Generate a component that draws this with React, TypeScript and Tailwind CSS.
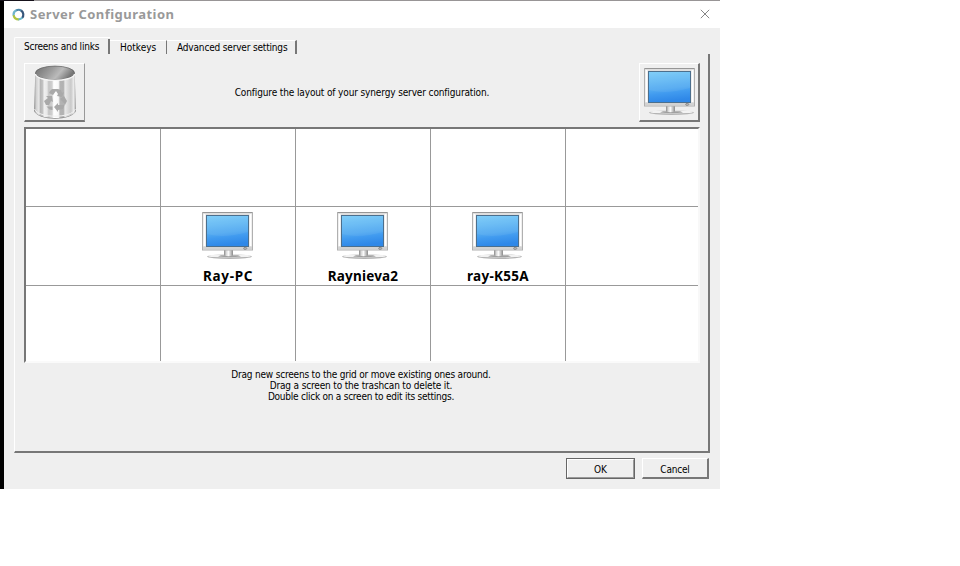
import React, { useId } from "react";

function Monitor({ className }: { className: string }) {
  const id = useId();
  return (
    <svg className={className} viewBox="0 0 52 48" preserveAspectRatio="none">
      <defs>
        <linearGradient id={id + "s"} x1="0" y1="0" x2="0.15" y2="1">
          <stop offset="0" stopColor="#7accf8" />
          <stop offset="0.6" stopColor="#51a9f1" />
          <stop offset="0.75" stopColor="#409aef" />
          <stop offset="1" stopColor="#2f88e8" />
        </linearGradient>
        <linearGradient id={id + "b"} x1="0" y1="0" x2="1" y2="0">
          <stop offset="0" stopColor="#8a8a8a" />
          <stop offset="0.25" stopColor="#d8d8d8" />
          <stop offset="0.5" stopColor="#fafafa" />
          <stop offset="1" stopColor="#8a8a8a" />
        </linearGradient>
      </defs>
      <ellipse cx="27.5" cy="44.6" rx="22.5" ry="2.4" fill="#b4b4b4" />
      <ellipse cx="27.5" cy="43.9" rx="21.5" ry="1.7" fill="#f2f2f2" />
      <path d="M19 43.3h17l3 1.2q-11 1.6-23 0z" fill="#a0a0a0" />
      <path d="M22 38h9v5.500q-4.500 1.500-9 0z" fill={`url(#${id}b)`} />
      <rect x="0.5" y="0.5" width="50" height="37.5" fill="#dedede" stroke="#b0b0b0" />
      <path d="M1 0.5h49" stroke="#969696" />
      <path d="M2.5 2v32M48.5 2v32" stroke="#fff" strokeWidth="2" />
      <rect x="1" y="35" width="49" height="2.5" fill="#d3d3d3" />
      <rect x="4.5" y="3.5" width="42" height="31" fill={`url(#${id}s)`} stroke="#4c6f8d" />
      <path d="M5 22q16 5 41-2v-16h-41z" fill="#fff" opacity="0.06" />
      <ellipse cx="43.2" cy="36.4" rx="1.6" ry="1" fill="#bbb" stroke="#777" strokeWidth="0.7" />
    </svg>
  );
}

function Trash() {
  return (
    <svg className="h-[55px] w-[44px]" viewBox="0 0 44 55">
      <defs>
        <linearGradient id="canBody">
          <stop offset="0" stopColor="#8a8a8a" />
          <stop offset="0.05" stopColor="#cfcfcf" />
          <stop offset="0.12" stopColor="#e8e8e8" />
          <stop offset="0.15" stopColor="#b5b5b5" />
          <stop offset="0.21" stopColor="#c4c4c4" />
          <stop offset="0.24" stopColor="#f0f0f0" />
          <stop offset="0.31" stopColor="#e8e8e8" />
          <stop offset="0.35" stopColor="#c5c5c5" />
          <stop offset="0.43" stopColor="#d0d0d0" />
          <stop offset="0.47" stopColor="#fff" />
          <stop offset="0.58" stopColor="#f8f8f8" />
          <stop offset="0.62" stopColor="#b4b4b4" />
          <stop offset="0.7" stopColor="#b1b1b1" />
          <stop offset="0.74" stopColor="#e8e8e8" />
          <stop offset="0.88" stopColor="#c9c9c9" />
          <stop offset="0.95" stopColor="#eee" />
          <stop offset="1" stopColor="#8a8a8a" />
        </linearGradient>
        <linearGradient id="canInside" x1="0" y1="0" x2="1" y2="0.3">
          <stop offset="0" stopColor="#6f6f6f" />
          <stop offset="0.45" stopColor="#9c9c9c" />
          <stop offset="0.7" stopColor="#bbb" />
          <stop offset="1" stopColor="#777" />
        </linearGradient>
      </defs>
      <path d="M1 45.5C4 56.5 40 56.5 43 45.5z" fill="#858585" />
      <path d="M2.3 8L1 45.5C4 55.5 40 55.5 43 45.5L41.7 8z" fill="url(#canBody)" />
      <path d="M1.6 44C5 53.6 39 53.6 42.4 44" fill="none" stroke="#f1f1f1" strokeWidth="1" />
      <ellipse cx="22" cy="8" rx="19.6" ry="6.9" fill="url(#canInside)" stroke="#606060" strokeWidth="0.7" />
      <path d="M2.5 9C4 17.5 40 17.5 41.5 9" fill="none" stroke="#f7f7f7" strokeWidth="1.4" />
      <g fill="#a9a9a9">
        <path d="M17 26l2-2h6l3 1 1 3 2-1-2 5-5-1 1-2-2-3-3 4-4-2z" />
        <path d="M13 31l6 0 1 6-2-1-2 4h-3l-2-4 4-3z" />
        <path d="M13.500 41.500h6v3.500l-3-.5z" />
        <path d="M21 42l4-4v2h5l2-1-2 5-5 1v2z" />
        <path d="M27 34l4-3 3 5-2 4-2-3z" />
      </g>
    </svg>
  );
}

const labelFont = "font-['DejaVu_Sans_Condensed','DejaVu_Sans',sans-serif] font-[stretch:condensed]";
const boldFont = "font-['Noto_Sans','Open_Sans',sans-serif] font-bold";

const rows: string[][] = [
  ["", "", "", "", ""],
  ["", "Ray-PC", "Raynieva2", "ray-K55A", ""],
  ["", "", "", "", ""],
];
const spacing: Record<string, string> = {
  "Ray-PC": "tracking-[0.7px]",
  Raynieva2: "tracking-[0.2px]",
  "ray-K55A": "tracking-[0.3px]",
};

export default function App() {
  return (
    <div className="h-[566px] w-[960px] overflow-hidden bg-white text-black">
      <div className="flex h-px w-[720px] bg-[#989596]">
        <div className="w-[34px] bg-[#15111a]" />
      </div>
      <div className="flex h-[488px] w-[720px] bg-black pl-1">
        <div className="flex w-[716px] flex-col bg-[#efefef]">
          <header className="flex h-[27px] shrink-0 items-center bg-white pl-[8px] pr-[10px]">
            <svg className="-mt-px h-[13px] w-[13px]" viewBox="0 0 13 13" fill="none" strokeWidth="2.2">
              <path d="M1.8 8A5 5 0 0 1 4.5 2.2" stroke="#6fb5cc" />
              <path d="M4.2 2.4A5 5 0 0 1 9.5 2.8" stroke="#4a86a8" />
              <path d="M9.2 2.500A5 5 0 0 1 10 10" stroke="#35557a" />
              <path d="M10.3 9.6A5 5 0 0 1 6 11.3" stroke="#6cb8ce" />
              <path d="M6.6 11.4A5 5 0 0 1 1.700 7.3" stroke="#b1c43e" />
            </svg>
            <h1 className={`${boldFont} -mt-[2px] ml-[5px] whitespace-nowrap text-[13px] leading-[20px] tracking-[0.47px] text-[#999]`}>Server Configuration</h1>
            <svg className="-mt-px ml-auto h-[10px] w-[10px]" viewBox="0 0 10 10">
              <path d="M.8.8l8.4 8.4M9.200.8L.8 9.200" stroke="#777" strokeWidth="0.9" />
            </svg>
          </header>

          <nav className={`${labelFont} mt-[9px] flex h-[17px] shrink-0 items-end whitespace-nowrap pl-[10px] text-[10px] leading-[12px]`}>
            <div className="h-[17px] w-[96px] rounded-tl-[2px] border-l border-t border-white pl-[9px] pt-[3px]">
              <div className="-mt-[2px] h-[15px] border-r-2 border-[#777] pt-[2px] tracking-[-0.22px]">Screens and links</div>
            </div>
            <div className="h-[14px] w-[57px] border-r border-t border-r-[#777] border-t-white pl-[10px] pt-[1px]">Hotkeys</div>
            <div className="h-[14px] w-[130px] border-r-2 border-t border-r-[#777] border-t-white pl-[10px] pt-[1px] tracking-[-0.17px]">Advanced server settings</div>
          </nav>

          <main className="ml-[10px] flex h-[399px] w-[696px] shrink-0 flex-col border-b-2 border-l border-r-2 border-b-[#777] border-l-white border-r-[#777] pl-[9px] pt-[9px]">
            <div className="flex h-[59px] w-[676px] items-center justify-between">
              <div className="flex h-[59px] w-[61px] items-center justify-center border-b-2 border-l border-r border-t border-b-[#777] border-l-white border-r-[#999] border-t-white">
                <Trash />
              </div>
              <p className={`${labelFont} whitespace-nowrap text-[10px] leading-[12px] tracking-[-0.13px]`}>Configure the layout of your synergy server configuration.</p>
              <div className="flex h-[59px] w-[61px] items-center justify-center border-b-2 border-l border-r-2 border-t border-b-[#777] border-l-white border-r-[#777] border-t-white pl-[2px]">
                <Monitor className="h-[48px] w-[52px]" />
              </div>
            </div>

            <div className="mt-[5px] grid h-[236px] w-[676px] grid-cols-[135px_135px_135px_135px_132px] grid-rows-[78px_79px_75px] border-2 border-b-[#fafafa] border-l-[#777] border-r-[#f8f8f8] border-t-[#777] bg-white">
              {rows.map((row, r) =>
                row.map((name, c) => (
                  <div key={`${r}-${c}`} className={`flex flex-col items-center border-[#999] ${c < 4 ? "border-r" : ""} ${r < 2 ? "border-b" : ""}`}>
                    {name && (
                      <>
                        <Monitor className="mt-[5px] h-[48px] w-[52px] shrink-0" />
                        <span className={`${boldFont} ${spacing[name]} mt-[8px] whitespace-nowrap text-[13.5px] leading-[16px]`}>{name}</span>
                      </>
                    )}
                  </div>
                ))
              )}
            </div>

            <div className={`${labelFont} mt-[6px] w-[674px] whitespace-nowrap text-center text-[10px] leading-[11px]`}>
              <p className="tracking-[-0.19px]">Drag new screens to the grid or move existing ones around.</p>
              <p className="tracking-[-0.16px]">Drag a screen to the trashcan to delete it.</p>
              <p className="tracking-[-0.24px]">Double click on a screen to edit its settings.</p>
            </div>
          </main>

          <footer className={`${labelFont} mt-[5px] flex justify-end gap-[7px] pr-[11px] text-[10px] leading-[12px]`}>
            <button className="h-[21px] w-[69px] border border-[#666] p-0">
              <span className="flex h-full items-center justify-center border-b border-l border-r border-t border-b-[#999] border-l-white border-r-[#999] border-t-white pt-[2px]">OK</span>
            </button>
            <button className="h-[21px] w-[67px] border-b-2 border-l border-r-2 border-t border-b-[#777] border-l-white border-r-[#777] border-t-white p-0 pt-[3px] tracking-[-0.2px]">Cancel</button>
          </footer>
        </div>
      </div>
    </div>
  );
}
